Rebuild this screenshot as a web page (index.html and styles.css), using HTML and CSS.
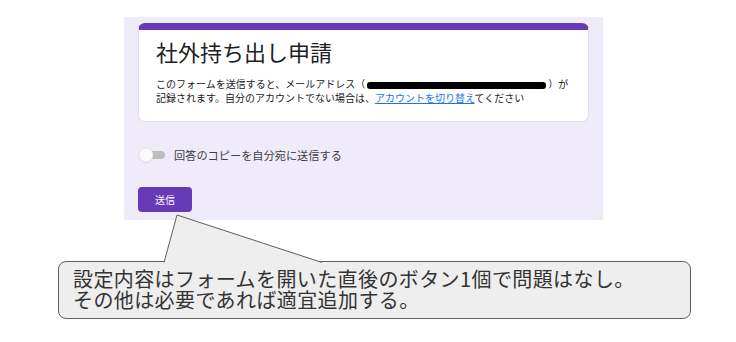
FILE: index.html
```html
<!DOCTYPE html>
<html lang="ja">
<head>
    <meta charset="UTF-8">
    <meta name="viewport" content="width=device-width, initial-scale=1.0">
    <title>社外持ち出し申請</title>
    <link rel="stylesheet" href="styles.css">
</head>
<body>

<main>
    <!-- Form preview -->
    <div class="form-panel">
        <div class="form-card">
            <h1>社外持ち出し申請</h1>
            <p class="form-note">
                このフォームを送信すると、メールアドレス（<span class="redacted"></span>）が<br>
                記録されます。自分のアカウントでない場合は、<a href="#">アカウントを切り替え</a>てください
            </p>
        </div>

        <div class="copy-row">
            <svg class="switch" width="30" height="18" viewBox="0 0 30 18">
                <rect x="6" y="5" width="22" height="8" rx="4" fill="#bdbdbd"/>
                <circle cx="9" cy="9.5" r="7.5" fill="#c8c8c8" opacity="0.5"/>
                <circle cx="9" cy="9" r="7" fill="#fafafa" stroke="#e0e0e0" stroke-width="0.6"/>
            </svg>
            <span>回答のコピーを自分宛に送信する</span>
        </div>

        <button type="button" class="submit">送信</button>
    </div>

    <!-- Note callout -->
    <div class="callout">
        <svg class="pointer" width="170" height="50" viewBox="0 0 170 50">
            <polygon points="19,1 6,48 6,50 165,50 164,48" fill="#eeeeee"/>
            <polyline points="6,48.5 19,1 164,48.5" fill="none" stroke="#5f5f5f" stroke-width="1"/>
        </svg>
        <p>設定内容はフォームを開いた直後のボタン1個で問題はなし。</p>
        <p>その他は必要であれば適宜追加する。</p>
    </div>
</main>

</body>
</html>
```

FILE: styles.css
```css
body {
    font-family: "Noto Sans CJK JP", "Noto Sans", sans-serif;
    background-color: #fff;
    color: #202124;
    margin: 0;
    padding: 0;
}
main {
    padding-top: 17px;
}
.form-panel {
    box-sizing: border-box;
    width: 479px;
    height: 203px;
    margin-left: 124px;
    padding: 6px 14px 0;
    background-color: #f0ebf8;
}
.form-card {
    box-sizing: border-box;
    height: 99px;
    padding: 7px 17px 0;
    background-color: #fff;
    border: 1px solid #e3dced;
    border-top: 7px solid #673ab7;
    border-radius: 7px;
}
.form-card h1 {
    margin: 0;
    font-size: 22px;
    font-weight: 400;
    line-height: 28px;
}
.form-note {
    margin: 12px 0 0;
    font-size: 10px;
    line-height: 14px;
}
.form-note a {
    color: #1a73e8;
}
.redacted {
    display: inline-block;
    width: 179px;
    height: 7px;
    margin: 0 2px;
    background-color: #000;
    border-radius: 3px;
    vertical-align: -1px;
}
.copy-row {
    display: flex;
    align-items: center;
    gap: 7px;
    height: 18px;
    margin-top: 24px;
    margin-left: -1px;
    font-size: 11.2px;
    color: #3c4043;
}
.switch {
    display: block;
}
.submit {
    display: block;
    width: 54px;
    height: 25px;
    margin-top: 23px;
    padding: 0;
    border: none;
    border-radius: 4px;
    background-color: #673ab7;
    color: #fff;
    font-family: inherit;
    font-size: 10px;
}
.callout {
    position: relative;
    display: flex;
    flex-direction: column;
    box-sizing: border-box;
    width: 633px;
    height: 58px;
    margin: 41px 0 0 58px;
    padding: 6px 14px 0;
    background-color: #eeeeee;
    border: 1px solid #5f5f5f;
    border-radius: 8px;
}
.callout p {
    margin: 0;
    font-size: 20px;
    line-height: 21px;
    letter-spacing: 0.4px;
    color: #333;
    white-space: nowrap;
}
.pointer {
    position: absolute;
    left: 99px;
    top: -48px;
}
```
